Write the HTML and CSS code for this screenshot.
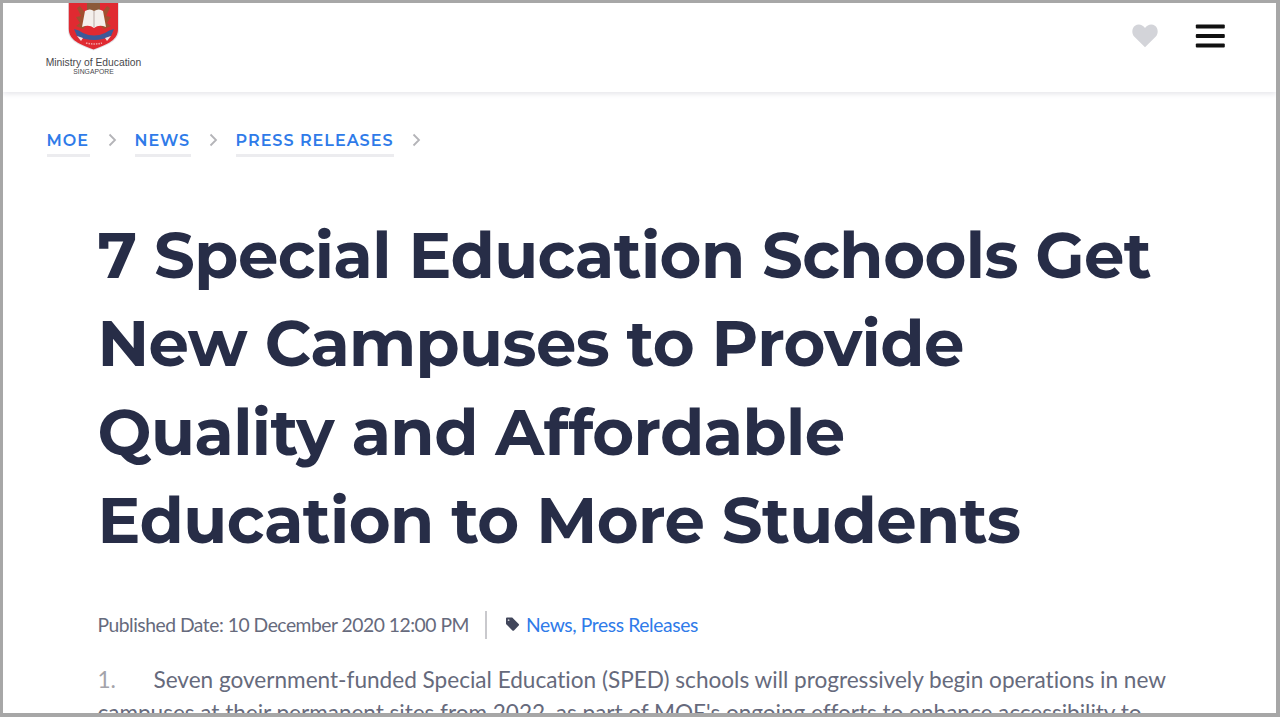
FILE: index.html
```html
<!DOCTYPE html>
<html lang="en">
<head>
<meta charset="utf-8">
<title>7 Special Education Schools Get New Campuses</title>
<link rel="stylesheet" href="styles.css">
</head>
<body>
<div class="page">
  <header class="header">
    <a class="brand">
      <svg class="crest" width="52" height="48" viewBox="0 0 52 48">
        <path d="M0 0H51V27C51 38 40 42 25.500 47.500C11 42 0 38 0 27Z" fill="#e3e3e8"/>
        <path d="M.8 0H50V26C50 37 40 41 25.500 46.500C11 41 .8 37 .8 26Z" fill="#e02a31"/>
        <path d="M9 5L12 3L15 7L18 10L17 16L19 22L15 26L8 23L12 20L8 14L13 13Z" fill="#a05030"/>
        <path d="M42 5L39 3L36 7L33 10L34 16L32 22L36 26L43 23L39 20L43 14L38 13Z" fill="#a05030"/>
        <path d="M19 0H32V7L26 9L19 7Z" fill="#8c5a38"/>
        <path d="M17 8Q22 5 26 8Q31 5 35 8L38 24Q31 21 26 25Q21 21 14 24Z" fill="#f4efec"/>
        <path d="M26 8V24" stroke="#b9aaa7" stroke-width="1"/>
        <path d="M6 26Q11 27 15 30Q26 35 37 30Q41 27 46 26L43 33Q35 37 26 37Q17 37 9 33Z" fill="#3c5a98"/>
        <path d="M9 33L15 35L13 38ZM43 33L37 35L39 38Z" fill="#f6dfe2"/>
        <path d="M18 40Q26 42 34 40" fill="none" stroke="#f0a2a5" stroke-width="1.5" stroke-dasharray="1.5 1"/>
      </svg>
      <span class="ministry">Ministry of Education</span>
      <span class="country">SINGAPORE</span>
    </a>
    <div class="actions">
      <svg width="26" height="24" viewBox="0 0 26 24"><path d="M13 23.3L2.4 12.8C-.6 9.6-.3 4.1 3 1.8C6.300-.6 10.500.5 13 4C15.500.5 19.700-.6 23 1.800C26.300 4.100 26.600 9.600 23.600 12.800Z" fill="#d3d4d9"/></svg>
      <svg width="30" height="24" viewBox="0 0 30 24"><g fill="#111"><rect x=".8" y=".5" width="29" height="4" rx="1"/><rect x=".8" y="10" width="29" height="4" rx="1"/><rect x=".8" y="19.600" width="29" height="4" rx="1"/></g></svg>
    </div>
  </header>
  <nav class="crumbs">
    <a class="crumb moe">MOE</a>
    <svg class="chevron" width="9" height="14" viewBox="0 0 9 14"><path d="M1.500 1.500L7 7L1.500 12.500"/></svg>
    <a class="crumb news">NEWS</a>
    <svg class="chevron" width="9" height="14" viewBox="0 0 9 14"><path d="M1.500 1.500L7 7L1.500 12.500"/></svg>
    <a class="crumb press">PRESS RELEASES</a>
    <svg class="chevron" width="9" height="14" viewBox="0 0 9 14"><path d="M1.500 1.500L7 7L1.500 12.500"/></svg>
  </nav>
  <main class="article">
    <h1 class="title">
      <span class="line">7 Special Education Schools Get</span>
      <span class="line">New Campuses to Provide</span>
      <span class="line">Quality and Affordable</span>
      <span class="line">Education to More Students</span>
    </h1>
    <div class="meta">
      <span class="date">Published Date: 10 December 2020 12:00 PM</span>
      <span class="divider"></span>
      <svg class="tag" width="15" height="15" viewBox="0 0 15 15"><path d="M1 1.500Q1 .5 2 .5H7.200L13.700 7Q14.500 7.800 13.700 8.600L9 13.400Q8.200 14.200 7.400 13.400L1 7Z" fill="#41465b"/><circle cx="3.600" cy="3.200" r=".9" fill="#c8c9d0"/></svg>
      <span class="topics"><a>News</a>, <a>Press Releases</a></span>
    </div>
    <div class="body">
      <div class="first"><span class="number">1.</span><span class="sentence">Seven government-funded Special Education (SPED) schools will progressively begin operations in new</span></div>
      <div class="second">campuses at their permanent sites from 2022, as part of MOE's ongoing efforts to enhance accessibility to</div>
    </div>
  </main>
</div>
</body>
</html>
```
FILE: styles.css
```css
* { box-sizing: border-box; }
body { margin: 0; }
.page { width: 1280px; height: 717px; overflow: hidden; background: #fff; border: 3px solid #a7a7a7; border-bottom-width: 4px; border-right-width: 4px; font-family: Lato, sans-serif; color: #666a7c; }
.header { height: 89px; display: flex; justify-content: space-between; padding: 0 51px 0 42px; box-shadow: 0 2px 5px #e6e6eb; }
.brand { display: flex; flex-direction: column; align-items: center; width: 97px; font-family: "Liberation Sans", sans-serif; color: #48484c; white-space: nowrap; }
.crest { display: block; }
.ministry { font-size: 10.3px; line-height: 11px; margin-top: 6px; }
.country { font-size: 6.8px; line-height: 8px; }
.actions { display: flex; gap: 37px; padding-top: 21px; }
.crumbs { display: flex; height: 30px; margin: 37px 0 0 43.5px; font-family: Montserrat, Inter, sans-serif; font-size: 16px; font-weight: 600; line-height: 24px; color: #2f7be9; }
.crumb { height: 28px; border-bottom: 3px solid #ececef; white-space: nowrap; }
.moe { width: 43px; letter-spacing: 1px; }
.news { width: 56px; letter-spacing: 1px; }
.press { width: 158px; letter-spacing: 1px; }
.chevron { margin: 4px 18px 0; fill: none; stroke: #b4b4b8; stroke-width: 1.8; }
.article { padding: 52px 90px 0 94.5px; }
.title { margin: 0; font-family: Montserrat, Inter, sans-serif; font-size: 64px; letter-spacing: -0.6px; line-height: 88.400px; font-weight: 700; color: #272d47; }
.line { display: block; white-space: nowrap; }
.meta { display: flex; align-items: center; height: 30px; margin-top: 45px; font-size: 19.3px; letter-spacing: -0.48px; line-height: 30px; white-space: nowrap; }
.date { width: 371.5px; }
.divider { width: 2px; height: 28px; background: #c9c9cd; margin: 0 18px 0 16px; }
.topics { color: #2f7be9; margin-left: 6px; letter-spacing: -0.4px; }
.body { margin-top: 23px; font-size: 22.600px; letter-spacing: -0.01px; line-height: 33px; white-space: nowrap; }
.first { display: flex; }
.number { width: 56px; color: #a3a3aa; }
.second { letter-spacing: -0.04px; }
```
